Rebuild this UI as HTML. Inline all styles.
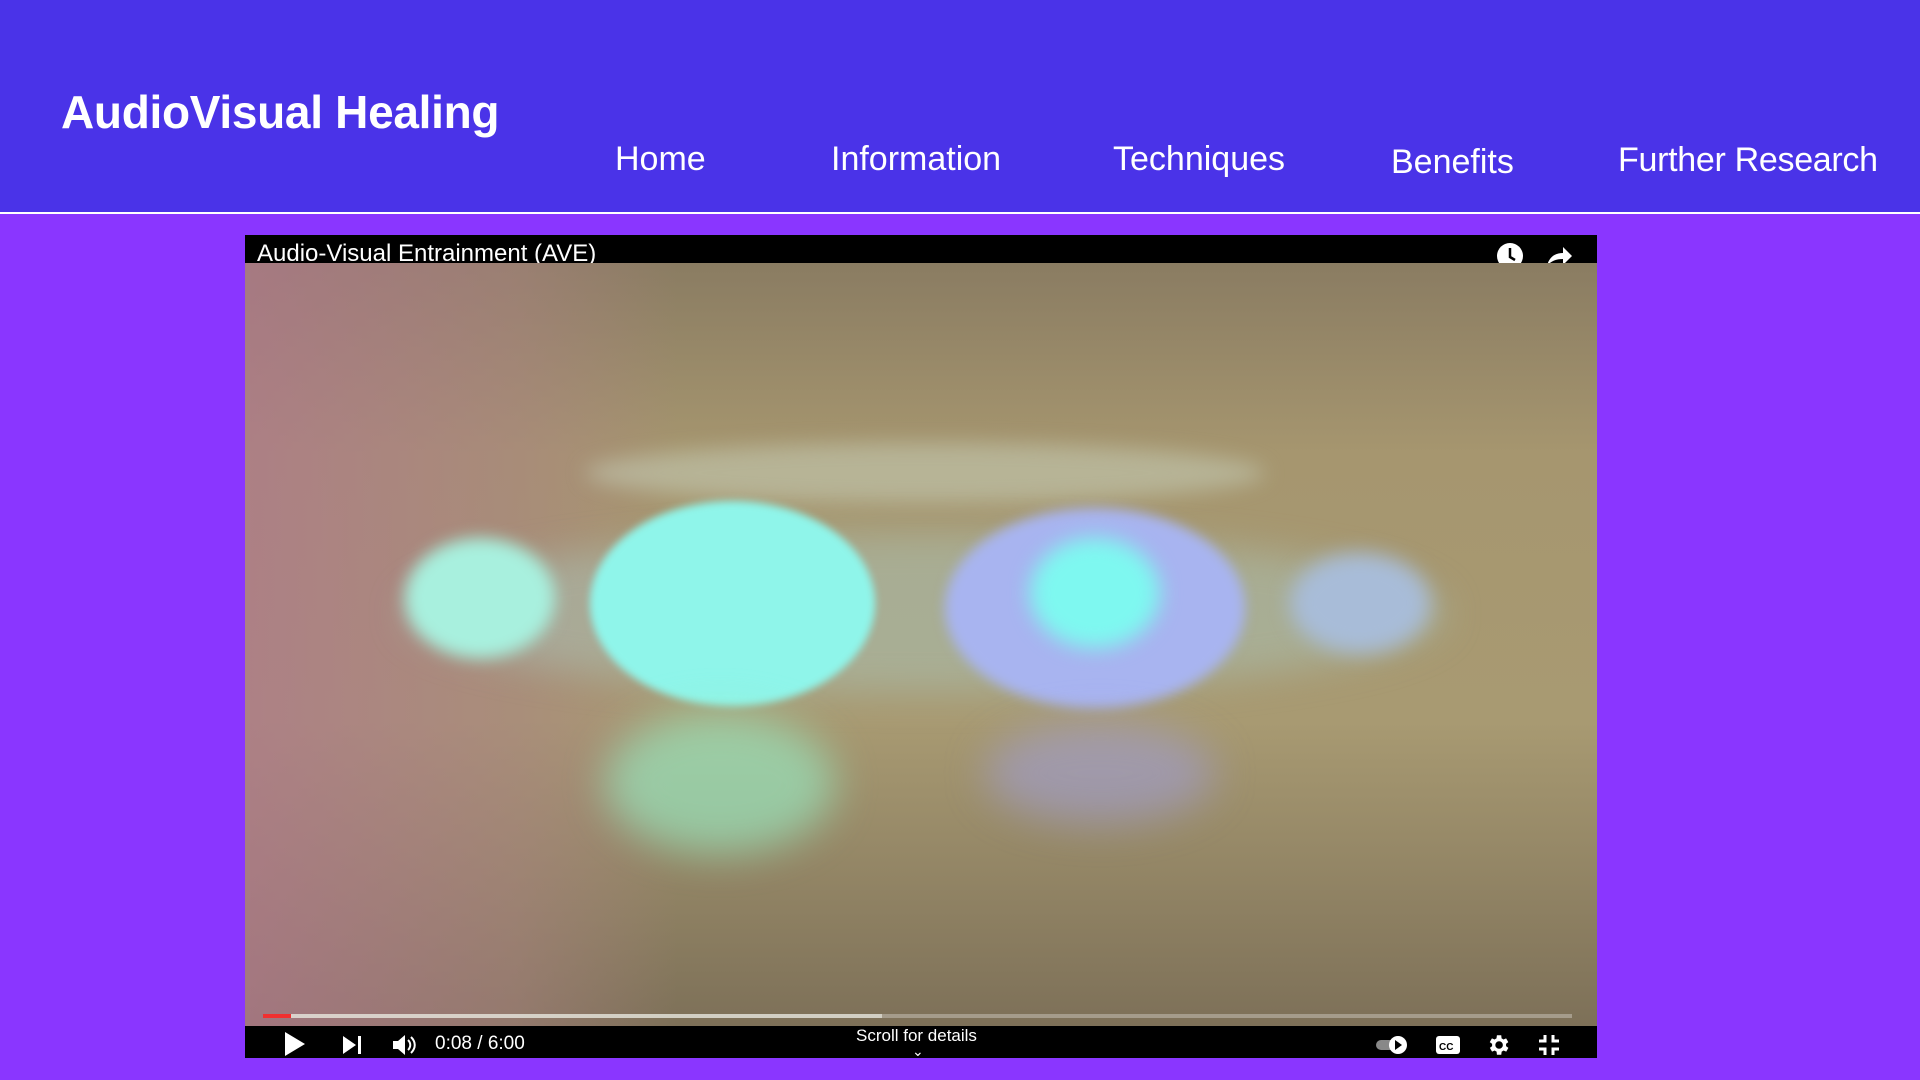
<!DOCTYPE html>
<html><head><meta charset="utf-8"><style>
*{margin:0;padding:0;box-sizing:border-box}
body{width:1920px;height:1080px;background:#8a36ff;font-family:"Liberation Sans",sans-serif;overflow:hidden;position:relative}
.hdr{position:absolute;left:0;top:0;width:1920px;height:214px;background:#4a33e8;border-bottom:2px solid #fff}
.title{position:absolute;left:61px;top:85px;font-size:46px;font-weight:bold;color:#fff;letter-spacing:-0.3px}
.nav{position:absolute;color:#fff;font-size:34px;font-family:"Liberation Sans",sans-serif}
.vid{position:absolute;left:245px;top:235px;width:1352px;height:823px;background:#000;overflow:hidden}
.img{position:absolute;left:0;top:28px;width:1352px;height:763px;
background:linear-gradient(90deg,rgba(175,120,140,.75) 0%,rgba(170,130,130,.5) 20%,rgba(0,0,0,0) 32%),linear-gradient(180deg,#8a7c62 0%,#a6966f 25%,#a89a72 60%,#7d7058 100%)}
.g{position:absolute;border-radius:50%}
.vt{position:absolute;left:12px;top:5px;color:#fff;font-size:24px}
.ctl{position:absolute;color:#fff}
</style></head><body>
<div class="hdr">
<div class="title">AudioVisual Healing</div>
<div class="nav" style="left:615px;top:140px">Home</div>
<div class="nav" style="left:831px;top:140px">Information</div>
<div class="nav" style="left:1113px;top:140px">Techniques</div>
<div class="nav" style="left:1391px;top:143px">Benefits</div>
<div class="nav" style="left:1618px;top:141px;letter-spacing:-0.3px">Further Research</div>
</div>
<div class="vid">
<div class="vt">Audio-Visual Entrainment (AVE)</div>
<svg style="position:absolute;left:1250px;top:6px" width="30" height="30"><circle cx="15" cy="15" r="13" fill="#fff"/><path d="M15 7v9l5 3" stroke="#000" stroke-width="2.5" fill="none"/></svg>
<svg style="position:absolute;left:1298px;top:7px" width="30" height="28"><path d="M4 24c2-9 8-13 16-13V5l9 9-9 9v-6c-7 0-12 2-16 7z" fill="#fff"/></svg>
<div class="img">
<div class="g" style="left:340px;top:180px;width:680px;height:60px;background:rgba(200,210,190,.5);filter:blur(10px)"></div>
<div class="g" style="left:160px;top:270px;width:1040px;height:160px;background:rgba(170,200,190,.45);filter:blur(18px)"></div>
<div class="g" style="left:345px;top:238px;width:285px;height:205px;background:#8ff5ea;filter:blur(4px)"></div>
<div class="g" style="left:160px;top:275px;width:150px;height:120px;background:#a8f0de;filter:blur(8px)"></div>
<div class="g" style="left:700px;top:245px;width:300px;height:200px;background:#a8b4f0;filter:blur(6px)"></div>
<div class="g" style="left:785px;top:275px;width:130px;height:110px;background:#7ef8f0;filter:blur(10px)"></div>
<div class="g" style="left:1045px;top:290px;width:140px;height:100px;background:#a8bcd8;filter:blur(10px)"></div>
<div class="g" style="left:360px;top:450px;width:230px;height:140px;background:rgba(150,240,200,.6);filter:blur(20px)"></div>
<div class="g" style="left:740px;top:460px;width:230px;height:100px;background:rgba(160,160,230,.5);filter:blur(20px)"></div>
<div style="position:absolute;left:18px;top:751px;width:1309px;height:4px;background:rgba(255,255,255,.3)"></div>
<div style="position:absolute;left:18px;top:751px;width:619px;height:4px;background:rgba(230,230,220,.7)"></div>
<div style="position:absolute;left:18px;top:751px;width:28px;height:4px;background:#f03030"></div>
</div>
<svg class="ctl" style="left:38px;top:796px" width="24" height="26"><path d="M2 1l20 12L2 25z" fill="#fff"/></svg>
<svg class="ctl" style="left:97px;top:800px" width="22" height="20"><path d="M1 1l13 9-13 9z M16 1h3v18h-3z" fill="#fff"/></svg>
<svg class="ctl" style="left:146px;top:798px" width="26" height="24"><path d="M2 8h5l7-6v20l-7-6H2z" fill="#fff"/><path d="M17 7c3 3 3 7 0 10M20 4c5 5 5 11 0 16" stroke="#fff" stroke-width="2" fill="none"/></svg>
<div class="ctl" style="left:190px;top:798px;font-size:19px">0:08 / 6:00</div>
<div class="ctl" style="left:611px;top:791px;font-size:17px">Scroll for details</div>
<div class="ctl" style="left:667px;top:808px;font-size:14px">⌄</div>
<svg class="ctl" style="left:1130px;top:800px" width="34" height="20"><rect x="1" y="5" width="26" height="10" rx="5" fill="#888"/><circle cx="23" cy="10" r="9" fill="#fff"/><path d="M20 5l7 5-7 5z" fill="#000"/></svg>
<svg class="ctl" style="left:1190px;top:799px" width="26" height="22"><rect x="1" y="2" width="24" height="18" rx="3" fill="#fff"/><text x="4" y="16" font-size="10" font-weight="bold" font-family="Liberation Sans">CC</text></svg>
<svg class="ctl" style="left:1240px;top:797px" width="26" height="26" viewBox="0 0 24 24"><path fill="#fff" d="M19.4 13a7.5 7.5 0 000-2l2.1-1.6-2-3.5-2.5 1a7 7 0 00-1.7-1L15 3h-4l-.4 2.9a7 7 0 00-1.7 1l-2.5-1-2 3.5L6.6 11a7.5 7.5 0 000 2l-2.1 1.6 2 3.5 2.5-1a7 7 0 001.7 1L11 21h4l.4-2.9a7 7 0 001.7-1l2.5 1 2-3.5zM13 15.5A3.5 3.5 0 1113 8.5a3.5 3.5 0 010 7z"/></svg>
<svg class="ctl" style="left:1292px;top:798px" width="24" height="24"><path d="M8 2v6H2M16 2v6h6M8 22v-6H2M16 22v-6h6" stroke="#fff" stroke-width="3" fill="none"/></svg>
</div>
</body></html>
